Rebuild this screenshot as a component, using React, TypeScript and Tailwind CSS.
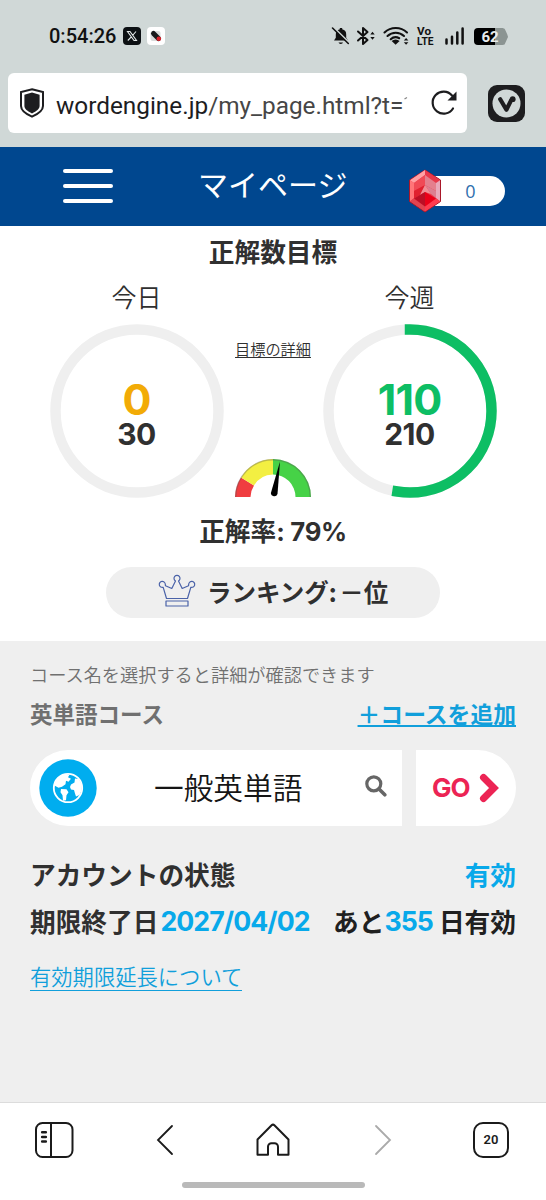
import type { ReactNode } from "react";

function StatusIcons() {
  return (
    <svg className="h-[22px] w-[180px] overflow-visible" viewBox="330 25 180 22" fill="none" stroke="#111" strokeLinecap="round">
      {/* muted bell */}
      <path d="M334 40.500h14l-1.800-2.800v-3.200a5.200 5.200 0 0 0-4-5.200v-1.200h-2.400v1.200a5.200 5.200 0 0 0-4 5.200v3.200z" fill="#111" stroke="none" />
      <path d="M338.500 42.500h4.500a2.300 1.800 0 0 1-4.500 0z" fill="#111" stroke="none" />
      <path d="M333.500 27.500l16 15.500" stroke="#d0d8d7" strokeWidth="1.800" />
      <path d="M332.500 28l15.800 15.500" strokeWidth="1.600" />
      {/* bluetooth */}
      <path d="M358 31.500l9.500 8.500-4.500 4v-16l4.500 4-9.500 8.500" strokeWidth="2" strokeLinejoin="round" />
      <path d="M370.300 34.600l2.200-2.800 2.200 2.800zM370.300 37l2.200 2.800 2.200-2.800z" fill="#111" stroke="none" />
      {/* wifi */}
      <path d="M384.500 32.500a16.500 16.500 0 0 1 22.500 0M387.500 36a12 12 0 0 1 16.500 0M390.700 39.200a7.500 7.500 0 0 1 8.500-1" strokeWidth="2.100" />
      <path d="M391.600 41a6 6 0 0 1 8 0l-4 3.800z" fill="#111" stroke="none" />
      <path d="M403.800 40.600l2.300-2.600 2.300 2.600zM403.800 42.200l2.300 2.600 2.300-2.600z" fill="#111" stroke="none" />
      <text x="417" y="35" fill="#111" stroke="none" fontFamily="Roboto, sans-serif" fontWeight="700" fontSize="10" textLength="14" lengthAdjust="spacingAndGlyphs">Vo</text>
      <text x="417" y="45" fill="#111" stroke="none" fontFamily="Roboto, sans-serif" fontWeight="700" fontSize="11" textLength="16.500" lengthAdjust="spacingAndGlyphs">LTE</text>
      {/* signal */}
      <path d="M446.500 39.500v4M452 36.800v6.700M457.300 32.500v11M462.600 28.500v15" strokeWidth="2.500" />
      {/* battery */}
      <path d="M478 28h17v17h-17a4 4 0 0 1-4-4v-9a4 4 0 0 1 4-4z" fill="#000" stroke="none" />
      <path d="M495 28h7.500a3 3 0 0 1 3 2.500l1.800 4a4 4 0 0 1 0 4l-1.800 4a3 3 0 0 1-3 2.500h-7.500z" fill="#8b9492" stroke="none" />
      <text x="490" y="42" fill="#e8eded" stroke="none" fontFamily="Roboto, sans-serif" fontWeight="700" fontSize="15" textAnchor="middle">62</text>
    </svg>
  );
}

function BrowserBar() {
  return (
    <div className="h-[147px] bg-[#d0d8d7] pt-[24px]">
      <div className="flex h-6 items-center pl-[49px]">
        <span className="w-[74px] whitespace-nowrap font-['Roboto'] text-[20px] font-medium leading-6 text-[#111]">0:54:26</span>
        <svg className="h-[18px] w-[18px]" viewBox="0 0 18 18">
          <rect width="18" height="18" rx="4" fill="#0c1013" />
          <path d="M4.500 4.500h2.500l6.500 9h-2.500zM13 4.500l-3.500 4M8.300 9.800l-3.500 3.700" fill="none" stroke="#e3e8e8" strokeWidth="1.100" />
        </svg>
        <svg className="ml-[6px] h-[18px] w-[18px]" viewBox="0 0 18 18">
          <rect width="18" height="18" rx="4" fill="#fff" />
          <rect x="3.500" y="4" width="10" height="10" rx="2" fill="#d9dcdc" />
          <path d="M6.500 6.500l5 5" stroke="#17191b" strokeWidth="5" strokeLinecap="round" />
          <circle cx="11.800" cy="11.800" r="2.300" fill="#d9202a" />
        </svg>
        <div className="ml-[165px] flex">
          <StatusIcons />
        </div>
      </div>
      <div className="mt-[25px] flex items-center pl-2">
        <div className="flex h-[60px] w-[459px] items-center rounded-md bg-white pl-[11px]">
          <svg className="h-[31px] w-[26px]" viewBox="0 0 26 31">
            <path d="M13 1.200L24 4v14c0 4.500-4.500 7.800-11 10.700C6.500 25.800 2 22.500 2 18V4z" fill="#fff" stroke="#1d1d1f" strokeWidth="2" />
            <path d="M13 4.600l7.600 2.200v11c0 3.200-3 5.500-7.600 7.600-4.600-2.100-7.600-4.400-7.600-7.600v-11z" fill="#1d1d1f" />
          </svg>
          <div className="ml-[11px] mt-[6px] flex whitespace-nowrap font-['Roboto'] text-[24.350px] leading-8 text-[#464646]">
            <span className="text-[#1d1d1f]">wordengine.jp</span>
            <span>/my_page.html?t=</span>
            <svg className="ml-px mt-[6px] h-[4px] w-[4px]" viewBox="0 0 4 4">
              <path d="M.5 3L3 1.500" stroke="#888" strokeWidth="1.300" />
            </svg>
          </div>
          <svg className="-mt-px ml-auto mr-[9px] h-[28px] w-[28px]" viewBox="0 0 28 28" fill="none">
            <path d="M23 19.500A11 11 0 1 1 22 6.500" stroke="#1d1d1f" strokeWidth="2.200" strokeLinecap="round" />
            <path d="M26.500 2.500v9H17.500z" fill="#1d1d1f" />
          </svg>
        </div>
        <svg className="ml-[21px] h-[37px] w-[37px]" viewBox="0 0 37 37">
          <rect width="37" height="37" rx="9" fill="#1d1d1f" />
          <circle cx="18.500" cy="18.500" r="14" fill="#d0d8d7" />
          <path d="M12.200 14.200l6.200 10.500 4.800-9.600" fill="none" stroke="#1d1d1f" strokeWidth="4.200" strokeLinecap="round" strokeLinejoin="round" />
          <circle cx="24.700" cy="14.200" r="2.900" fill="#1d1d1f" />
        </svg>
      </div>
    </div>
  );
}

function Ruby() {
  return (
    <svg className="relative z-10 h-[44px] w-[32px]" viewBox="0 0 32 44">
      <path d="M16 1l15.500 10v21.500L16 43 .5 32.500V11z" fill="#ea3a4b" stroke="#a91729" />
      <path d="M16 1L1 11.300l4 2.700 11-8z" fill="#ffa0a4" />
      <path d="M16 1l15 10.300-4 2.700-11-8z" fill="#e8384a" />
      <path d="M31 11.300v21L27 29V14z" fill="#e9a9ba" />
      <path d="M1 11.300v21L5 29V14z" fill="#ff7478" />
      <path d="M1 32.300L16 42.500v-5L5 29.500z" fill="#e04450" />
      <path d="M31 32.300L16 42.500v-5l11-8z" fill="#ff3b4f" />
      <path d="M16 6L5 14v8l11-6z" fill="#f04a56" />
      <path d="M16 6l11 8v8l-11-6z" fill="#e4808e" />
      <path d="M5 22l11-6-5 10-6 3.500z" fill="#e0202f" />
      <path d="M27 22l-11-6 6 9 5 4z" fill="#dc7f90" />
      <path d="M16 16l-5 10 5-3 6 2z" fill="#f08d95" />
      <path d="M16 23L5 29.500l11 8z" fill="#bb0f25" />
      <path d="M16 23l11 6.500-11 8z" fill="#ea0019" />
    </svg>
  );
}

function Header() {
  return (
    <header className="flex h-[79px] items-center bg-[#00478f] pl-[63px]">
      <div className="-mt-px flex w-[50px] flex-col gap-[11px]">
        <div className="h-1 rounded-full bg-white" />
        <div className="h-1 rounded-full bg-white" />
        <div className="h-1 rounded-full bg-white" />
      </div>
      <h1 className="-mt-[7px] ml-[85px] w-[211px] whitespace-nowrap text-[30px] font-normal leading-10 text-white">マイページ</h1>
      <div className="mt-[9px] flex items-center">
        <Ruby />
        <div className="-ml-3 flex h-[30px] w-[76px] items-center justify-center rounded-r-full bg-white pl-[7px] font-['Open_Sans'] text-[18px] text-[#2f6fae]">0</div>
      </div>
    </header>
  );
}

interface GoalProps {
  label: string;
  value: number;
  target: number;
  color: string;
}

function Goal({ label, value, target, color }: GoalProps) {
  const length = 2 * Math.PI * 81.5;
  return (
    <div className="w-[174px]">
      <div className="h-[46px] text-center text-[25px] font-[350] leading-[36px]">{label}</div>
      <div className="grid h-[174px] place-items-center">
        <svg className="col-start-1 row-start-1 h-[174px] w-[174px] -rotate-90" viewBox="0 0 174 174" fill="none" strokeWidth="10.500">
          <circle cx="87" cy="87" r="81.500" stroke="#efefef" />
          {value > 0 && (
            <circle cx="87" cy="87" r="81.500" stroke={color} strokeLinecap="square" strokeDasharray={`${(length * value) / target} ${length}`} />
          )}
        </svg>
        <div className="col-start-1 row-start-1 pt-[9px] text-center font-['Inter'] font-bold">
          <div className="text-[43px] leading-[38px] tracking-[-0.8px]" style={{ color }}>{value}</div>
          <div className="text-[30px] leading-[33px] tracking-[-0.5px]">{target}</div>
        </div>
      </div>
    </div>
  );
}

function Gauge() {
  return (
    <svg className="h-[38px] w-[76px]" viewBox="0 0 76 38">
      <path d="M0 38a38 38 0 0 1 6-19.500l13 8A22.500 22.500 0 0 0 15.500 38z" fill="#f03d40" />
      <path d="M6 18.500A38 38 0 0 1 38 0v15.500a22.500 22.500 0 0 0-19 11z" fill="#f3ef42" />
      <path d="M38 0a38 38 0 0 1 38 38H60.500A22.500 22.500 0 0 0 38 15.500z" fill="#46d247" />
      <path d="M.7 38a37.300 37.300 0 0 1 74.600 0" fill="none" stroke="#555" strokeOpacity=".35" strokeWidth="1.400" />
      <path d="M45 2.500l-2.500 32.500a3.400 3.400 0 0 1-6.600-1z" fill="#000" />
    </svg>
  );
}

function Crown() {
  return (
    <svg className="h-[33px] w-[38px]" viewBox="0 0 38 33" fill="none" stroke="#4a62a8" strokeWidth="1.200" strokeLinejoin="round">
      <path d="M8.500 24.500L5.200 13.300A3 3 0 1 1 7.300 10.300l.2 1.500 6.300 2.700 3.700-7.500a3 3 0 1 1 3 0l3.700 7.500 6.300-2.700.2-1.500a3 3 0 1 1 2.100 3L29.500 24.500z" />
      <path d="M8 27h22v5H8z" />
    </svg>
  );
}

function Goals() {
  return (
    <section className="flex h-[415px] flex-col items-center bg-white text-[#303030]">
      <h2 className="mt-[7px] text-[25.700px] font-bold leading-[36px]">正解数目標</h2>
      <div className="mt-[9px] flex">
        <Goal label="今日" value={0} target={30} color="#f2ab06" />
        <div className="mx-[11px] flex w-[77px] flex-col items-center">
          <a className="mt-[59px] whitespace-nowrap text-[15.200px] font-[350] leading-[22px] underline underline-offset-2">目標の詳細</a>
          <div className="mt-[100px]">
            <Gauge />
          </div>
        </div>
        <Goal label="今週" value={110} target={210} color="#0dbe64" />
      </div>
      <div className="mt-[13px] whitespace-nowrap text-[25.700px] font-bold leading-[38px]">
        正解率<span className="font-['Inter'] tracking-[-0.3px]">: 79%</span>
      </div>
      <div className="mt-[16px] flex h-[51px] w-[334px] items-center rounded-full bg-[#efefef] pl-[52px]">
        <div className="-mt-[4px]">
          <Crown />
        </div>
        <span className="-mt-[2px] ml-[11px] whitespace-nowrap text-[24.500px] font-bold leading-9">
          ランキング<span className="tracking-[-1.500px]">: </span>－位
        </span>
      </div>
    </section>
  );
}

function Row({ children, className }: { children: ReactNode; className: string }) {
  return <div className={`flex items-center justify-between whitespace-nowrap font-bold ${className}`}>{children}</div>;
}

function Courses() {
  return (
    <section className="h-[461px] bg-[#efefef] px-[30px] pt-[20px] text-[#303030]">
      <p className="whitespace-nowrap text-[18.200px] font-[350] leading-[27px] text-[#707070]">コース名を選択すると詳細が確認できます</p>
      <Row className="mt-[10px] h-[32px] text-[22.500px]">
        <span className="text-[#707070]">英単語コース</span>
        <a className="text-[22.800px] text-[#119fdb] underline decoration-2 underline-offset-2">＋コースを追加</a>
      </Row>
      <div className="mt-[20px] flex h-[76px] gap-[14px]">
        <div className="flex w-[372px] items-center rounded-l-full bg-white pl-[9px]">
          <svg className="h-[58px] w-[58px]" viewBox="0 0 58 58">
            <circle cx="29" cy="29" r="28.700" fill="#00adef" />
            <circle cx="29" cy="29" r="14.200" fill="none" stroke="#fff" strokeWidth="1.800" />
            <path d="M17 21.500c2-3.500 5.500-6 10-6.500l3.500.7-1.500 2.500 3 1.500-2.500 3-2.500-1-.5 3.500-3.500 2.500-3.500 1-4.500-2.500z" fill="#fff" />
            <path d="M22 30l5.500.2 2 3-2 3-.5 5-3 .5-.5-5.500-2-3z" fill="#fff" />
            <path d="M32 25.500l3.500-2 .5-4 3.500.5c2 2.500 3.300 5 3.300 8.500 0 3-1 5-2.300 7.500l-3.500 1.500-1-3-1-3.500-3-.5-1-2.500z" fill="#fff" />
          </svg>
          <span className="-mt-[3px] ml-[57px] w-[211px] whitespace-nowrap text-[29.700px] font-[350] leading-10 text-[#151515]">一般英単語</span>
          <svg className="-mt-[5px] h-[22px] w-[22px]" viewBox="0 0 22 22" fill="none" stroke="#666">
            <circle cx="8.800" cy="8.800" r="7" strokeWidth="3.200" />
            <path d="M14 14l5.800 5.800" strokeWidth="3.600" strokeLinecap="round" />
          </svg>
        </div>
        <div className="flex w-[100px] items-center rounded-r-full bg-white pl-4 font-['Inter'] text-[26px] font-bold tracking-[-1px] text-[#ec2454]">
          <span className="-mt-[2px] w-[47px]">GO</span>
          <svg className="h-[30px] w-[20px]" viewBox="0 0 20 30" fill="none" stroke="#ec2454">
            <path d="M4.500 4.500L15 15 4.500 25.500" strokeWidth="7" strokeLinecap="round" />
          </svg>
        </div>
      </div>
      <Row className="mt-[29px] h-[38px] text-[25.700px]">
        <span>アカウントの状態</span>
        <span className="text-[#08a9ea]">有効</span>
      </Row>
      <Row className="mt-[9px] h-[38px] text-[25.700px]">
        <div className="flex items-center">
          期限終了日<span className="ml-[2px] font-['Inter'] text-[26.700px] tracking-[-0.950px] text-[#08a9ea]">2027/04/02</span>
        </div>
        <div className="flex items-center text-[#202020]">
          あと<span className="mr-[6px] font-['Inter'] text-[26.700px] tracking-[-0.950px] text-[#08a9ea]">355</span>日有効
        </div>
      </Row>
      <a className="mt-[22px] inline-block whitespace-nowrap border-b border-[#119fdb] text-[21.300px] font-[350] leading-[28px] text-[#119fdb]">有効期限延長について</a>
    </section>
  );
}

function BottomNav() {
  return (
    <nav className="flex h-[98px] flex-col items-center border-t border-[#dcdcdc] bg-white">
      <div className="flex h-[73px] w-full items-center justify-between pl-[34px] pr-[37px] text-[#1b1b1b]">
        <svg className="h-[38px] w-[40px]" viewBox="0 0 40 38" fill="none" stroke="currentColor" strokeWidth="2">
          <rect x="2" y="2" width="36.500" height="34" rx="6.500" />
          <path d="M17 2v34" />
          <path d="M8.200 11.300h3.600M8.200 16h3.600M8.200 20.500h3.600" strokeWidth="2.600" strokeLinecap="round" />
        </svg>
        <svg className="ml-[26px] h-[32px] w-[18px]" viewBox="0 0 18 32" fill="none" stroke="currentColor" strokeWidth="1.800" strokeLinecap="round">
          <path d="M16 2L2 16l14 14" />
        </svg>
        <svg className="ml-[26px] h-[36px] w-[36px]" viewBox="0 0 36 36" fill="none" stroke="currentColor" strokeWidth="2" strokeLinejoin="round">
          <path d="M2.500 17.500L16.600 3.300a2 2 0 0 1 2.800 0l14.100 14.200v15.300H23v-8a3.500 3.500 0 0 0-3.500-3.500h-3a3.500 3.500 0 0 0-3.500 3.500v8H2.500z" />
        </svg>
        <svg className="ml-[27px] h-[32px] w-[18px]" viewBox="0 0 18 32" fill="none" stroke="#aaa" strokeWidth="1.800" strokeLinecap="round">
          <path d="M2 2l14 14L2 30" />
        </svg>
        <div className="ml-[26px] flex h-[36px] w-[36px] items-center justify-center rounded-[10px] border-2 border-current font-['Roboto'] text-[13px] font-semibold">20</div>
      </div>
      <div className="mt-[6px] h-[6px] w-[183px] rounded-full bg-[#b9b9b9]" />
    </nav>
  );
}

export default function App() {
  return (
    <main className="h-[1200px] w-[546px] overflow-hidden font-['Noto_Sans_CJK_JP',sans-serif]">
      <BrowserBar />
      <Header />
      <Goals />
      <Courses />
      <BottomNav />
    </main>
  );
}
